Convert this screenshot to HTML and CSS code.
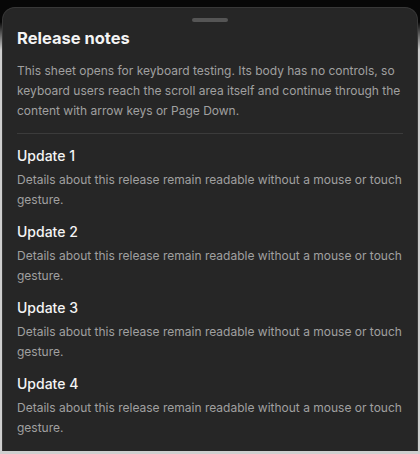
FILE: index.html
```html
<!doctype html>
<html lang="en">
<head>
    <meta charset="UTF-8">
    <meta name="viewport" content="width=device-width, initial-scale=1.0">
    <title>Release notes</title>
    <link rel="stylesheet" href="styles.css">
</head>
<body>
<section class="sheet" role="dialog" aria-labelledby="sheet-title">
    <div class="handle"></div>
    <h1 id="sheet-title">Release notes</h1>
    <div class="body" tabindex="0">
        <p class="intro">
            This sheet opens for keyboard testing. Its body has no controls, so
            keyboard users reach the scroll area itself and continue through the
            content with arrow keys or Page Down.
        </p>
        <article class="update">
            <h2>Update 1</h2>
            <p>Details about this release remain readable without a mouse or touch gesture.</p>
        </article>
        <article class="update">
            <h2>Update 2</h2>
            <p>Details about this release remain readable without a mouse or touch gesture.</p>
        </article>
        <article class="update">
            <h2>Update 3</h2>
            <p>Details about this release remain readable without a mouse or touch gesture.</p>
        </article>
        <article class="update">
            <h2>Update 4</h2>
            <p>Details about this release remain readable without a mouse or touch gesture.</p>
        </article>
    </div>
</section>
</body>
</html>
```

FILE: styles.css
```css
:root {
    --sheet: #262626;
    --line: #3b3b3b;
    --text: #f4f4f4;
    --muted: #a0a0a0;
}

html, body {
    height: 100%;
}

body {
    margin: 0;
    padding: 7px 2px 3px;
    box-sizing: border-box;
    background: linear-gradient(to bottom, #070707 0, #070707 22px, #cfcfcf 50px) #cfcfcf;
    font-family: Inter, "Noto Sans", sans-serif;
    overflow: hidden;
}

.sheet {
    height: 100%;
    box-sizing: border-box;
    display: flex;
    flex-direction: column;
    padding: 10px 14px 0 14px;
    background-color: var(--sheet);
    border: 1px solid #383838;
    border-bottom: none;
    border-radius: 13px 13px 0 0;
    color: var(--text);
}

.handle {
    align-self: center;
    width: 36px;
    height: 4px;
    border-radius: 2px;
    background-color: #555;
}

h1 {
    margin: 4px 0 0;
    font-size: 16.5px;
    line-height: 24px;
    font-weight: 700;
}

.body {
    flex: 1;
    overflow: hidden;
    outline: none;
}

.intro {
    margin: 11px 0 0;
    padding-bottom: 12px;
    border-bottom: 1px solid var(--line);
    font-size: 12px;
    line-height: 20px;
    color: var(--muted);
}

.update {
    margin-top: 12px;
}

.update h2 {
    margin: 0 0 4px;
    font-size: 14px;
    line-height: 20px;
    font-weight: 500;
}

.update p {
    margin: 0;
    font-size: 12px;
    line-height: 20px;
    color: var(--muted);
}
```
